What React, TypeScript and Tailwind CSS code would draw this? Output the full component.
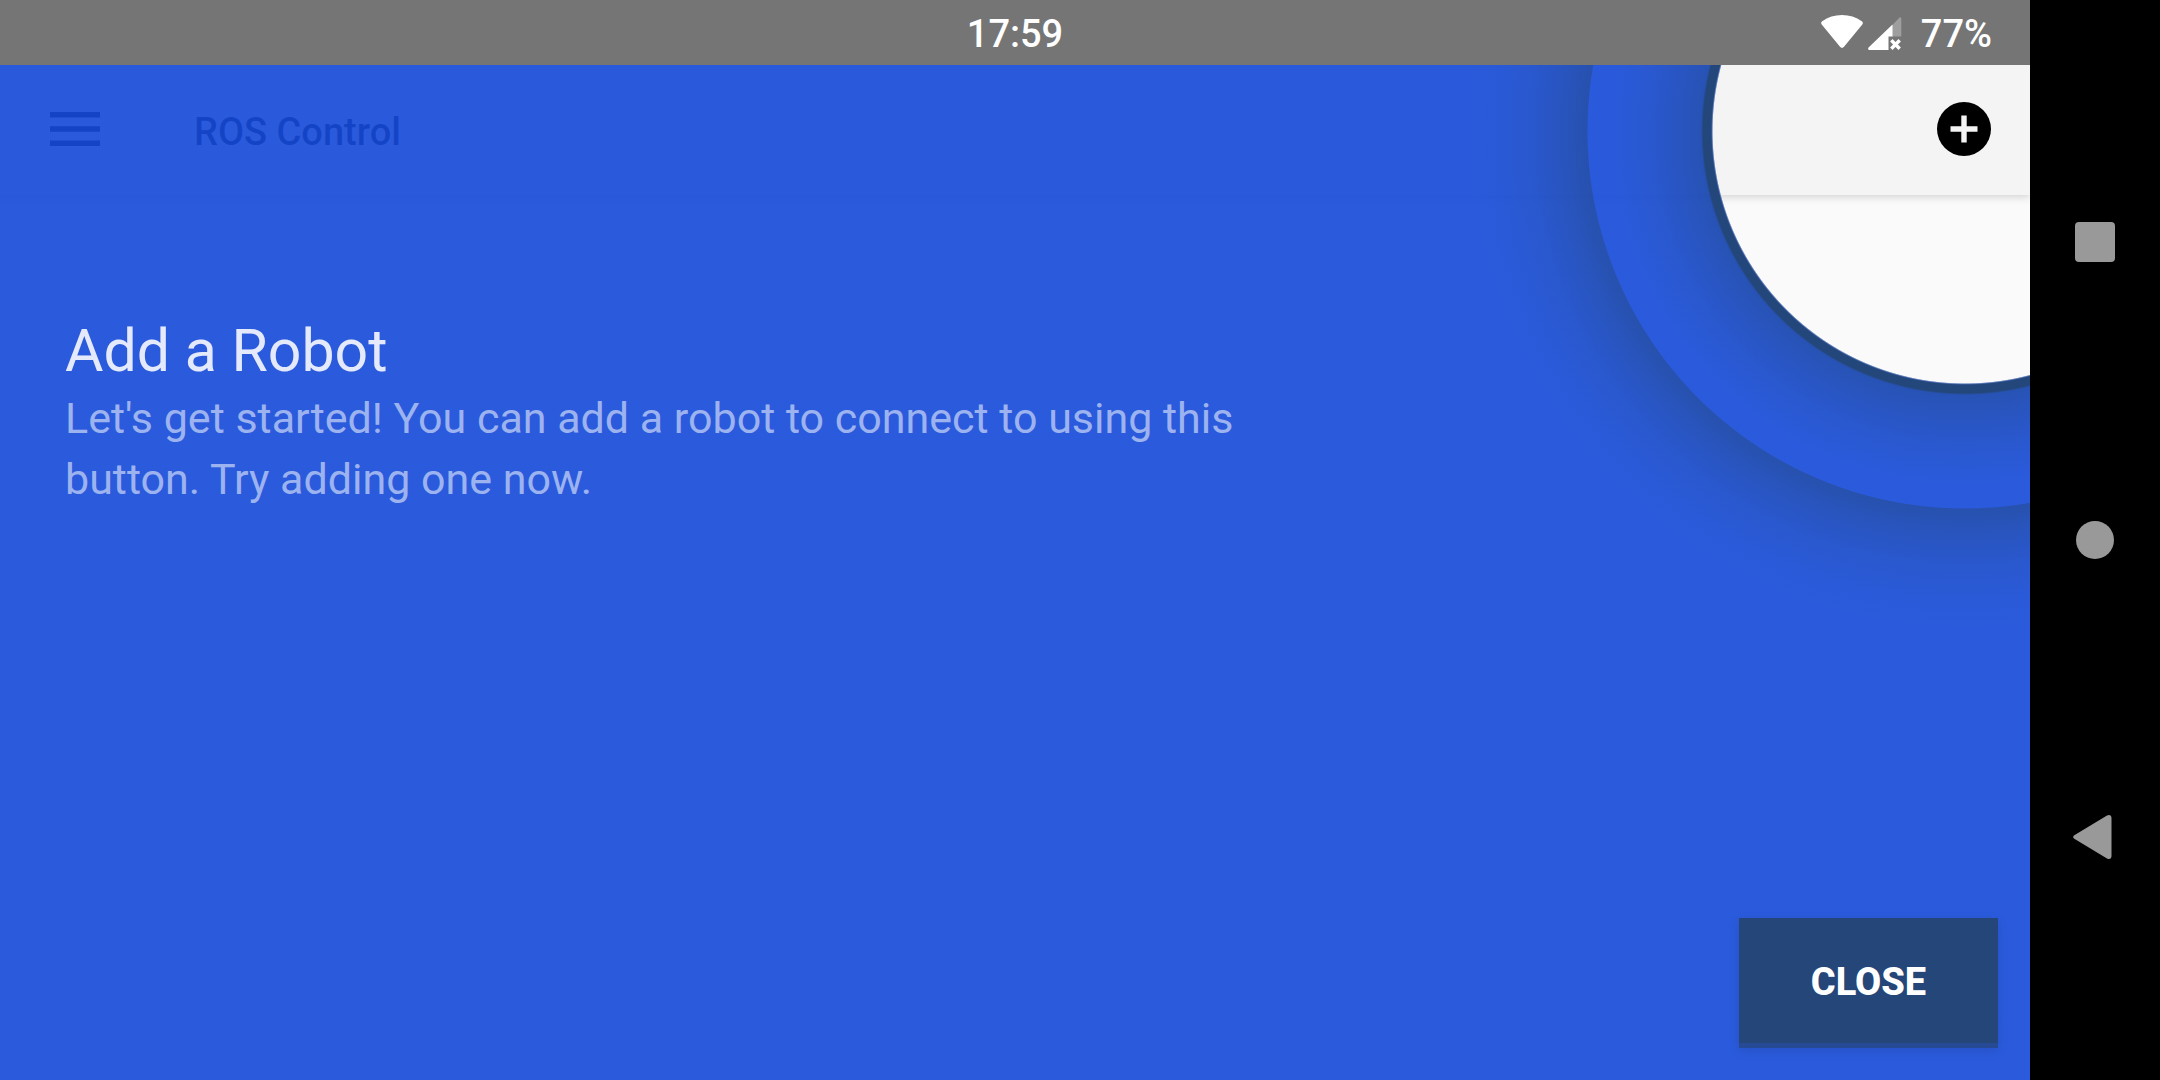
import React from "react";

function StatusBar() {
  return (
    <div className="grid h-[65px] shrink-0 grid-cols-3 items-center bg-[#757575] px-[38px] pt-[2px] text-[38px] font-medium leading-[44px] text-white">
      <span className="col-start-2 text-center">17:59</span>
      <div className="flex items-center justify-end">
        <div className="flex pb-[2px]">
          <svg className="h-[33px] w-[42px]" viewBox="0 0 42 33" fill="#fff" aria-label="Wi-Fi">
            <path d="M1.2 6.2C7 2 13.6 0 21 0s14 2 19.8 6.2c1.2.9 1.4 2.2.5 3.3L23 31.8c-1.2 1.5-2.8 1.5-4 0L.7 9.5C-.2 8.4 0 7.1 1.2 6.2z" />
          </svg>
          <svg className="ml-[5px] mt-[2px] h-[33px] w-[34px]" viewBox="0 0 34 33" fill="#fff" aria-label="No mobile signal">
            <path fillOpacity=".3" d="M24 8.5 31 1c1-1.2 2.3-.8 2.3.8V19.500H24z" />
            <path d="M24.5 7.500V19.500H20.500V33H2C0 33-.5 31.500.8 30.300z" />
            <path d="m23.300 23.300 8.400 8.400m0-8.400-8.400 8.400" stroke="#fff" strokeWidth="3.400" fill="none" />
          </svg>
        </div>
        <span className="ml-[19px]">77%</span>
      </div>
    </div>
  );
}

function Toolbar() {
  return (
    <header className="flex h-[130px] shrink-0 items-center bg-[#f4f4f4] pb-[2px] pl-[43px] pr-[34px] text-black shadow-[0_2px_8px_rgba(0,0,0,0.16)]">
      <button aria-label="Open menu" className="flex h-16 w-16 items-center justify-center">
        <svg className="h-[34px] w-[50px]" viewBox="0 0 50 34">
          <path d="M0 0h50v5.500H0zM0 14.200h50v5.500H0zM0 28.500h50V34H0z" />
        </svg>
      </button>
      <h1 className="ml-[87px] pt-[6px] text-[38px] font-medium leading-[44px]">ROS Control</h1>
      <button aria-label="Add robot" className="ml-auto flex h-16 w-16 items-center justify-center">
        <svg className="h-[54px] w-[54px]" viewBox="0 0 54 54">
          <circle cx="27" cy="27" r="27" />
          <path d="M27 13.500v27M13.500 27h27" stroke="#f4f4f4" strokeWidth="5.400" />
        </svg>
      </button>
    </header>
  );
}

function Showcase() {
  return (
    <section
      aria-label="Add a Robot"
      className="absolute inset-0 flex flex-col justify-between bg-[radial-gradient(circle_at_calc(100%_-_65px)_66px,transparent_252px,#24477b_254px,#24477b_262px,#24477b66_264px,#24477b47_287px,#24477b1f_318px,#24477b00_355px,#24477b00_377px,#24477b7a_378px,#24477b52_400px,#24477b24_435px,#24477b0a_470px,#24477b00_500px),radial-gradient(circle_at_calc(100%_-_65px)_66px,transparent_252px,#164bd9e8_254px)] pb-8 pl-[65px] pr-8 pt-[248px]"
    >
      <div>
        <h2 className="text-[59px] leading-[75px] text-[#e4eafb]">Add a Robot</h2>
        <p className="max-w-[1240px] text-[43px] leading-[61px] text-[#9db3f0]">
          Let's get started! You can add a robot to connect to using this button. Try adding one now.
        </p>
      </div>
      <button className="h-[130px] w-[259px] self-end border-b-[5px] border-[#264b94] bg-[#254679] pt-[2px] text-[38px] font-extrabold leading-[44px] text-white shadow-[0_3px_10px_rgba(0,0,0,0.1)]">
        CLOSE
      </button>
    </section>
  );
}

function NavigationBar() {
  return (
    <nav className="flex w-[130px] shrink-0 flex-col items-center justify-between bg-black py-[202px]">
      <button aria-label="Recent apps" className="flex h-20 w-20 items-center justify-center">
        <span className="h-10 w-10 rounded-[4px] bg-[#999]" />
      </button>
      <button aria-label="Home" className="flex h-20 w-20 items-center justify-center">
        <span className="h-[38px] w-[38px] rounded-full bg-[#999]" />
      </button>
      <button aria-label="Back" className="flex h-20 w-20 items-center justify-center">
        <svg className="mb-[2px] mr-[5px] h-[44px] w-[39px]" viewBox="0 0 39 44" fill="#999">
          <path d="M1.300 20.300 34 .6c2.500-1.300 4.500-.2 4.500 2.400v38c0 2.600-2 3.700-4.500 2.400L1.300 23.700c-1.500-.9-1.500-2.500 0-3.400z" />
        </svg>
      </button>
    </nav>
  );
}

export default function App() {
  return (
    <div className="flex min-h-screen bg-black font-['Roboto',sans-serif]">
      <div className="flex min-w-0 flex-1 flex-col">
        <StatusBar />
        <main className="relative flex flex-1 flex-col overflow-hidden bg-[#fafafa]">
          <Toolbar />
          <Showcase />
        </main>
      </div>
      <NavigationBar />
    </div>
  );
}
